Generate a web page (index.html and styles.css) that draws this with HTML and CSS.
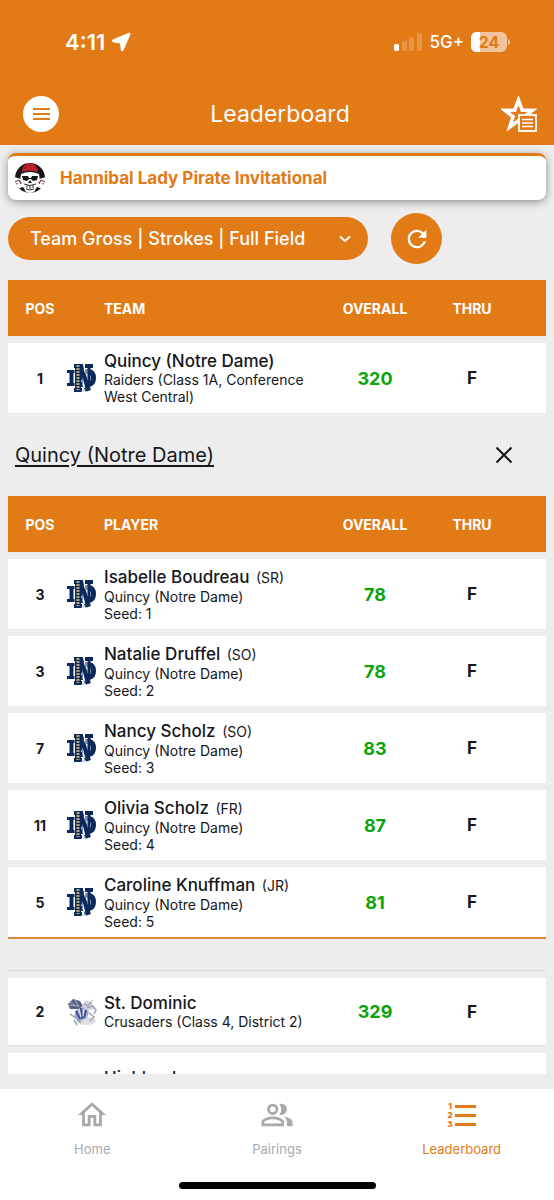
FILE: index.html
```html
<!DOCTYPE html>
<html lang="en">
<head>
  <meta charset="UTF-8" />
  <title>Leaderboard</title>
  <meta name="viewport" content="width=device-width, initial-scale=1" />
  <link rel="stylesheet" href="styles.css">
</head>
<body>
  <!-- shared team logo -->
  <svg class="defs" aria-hidden="true">
    <symbol id="logo-nd" viewBox="0 0 30 30">
      <g fill="none" stroke="#0b2a5b">
        <path d="M4.500 8v14" stroke-width="4" />
        <path d="M0 8.500h10M0 21.500h10" stroke-width="3" />
        <path d="M17 8.500h5q4.500 1 4.500 6.500t-4.500 6.500h-8" stroke-width="5" />
        <path d="M15 2l0 0M7 3h9M18 3h8M7 27h8" stroke-width="4" />
      </g>
      <g fill="none" stroke="#fff">
        <path d="M8 6v18M20 6v20" stroke-width="1" />
      </g>
      <g fill="none" stroke="#0b2a5b">
        <path d="M11 3v24" stroke-width="6" />
        <path d="M22 3v20" stroke-width="3" />
        <path d="M13 3l8 25" stroke-width="6" />
      </g>
      <path d="M15.500 14v9l3 3zM18.500 6v6l-2-6z" fill="#fff" />
      <path d="M11 2v25" stroke="#b5a57c" stroke-width="3" stroke-dasharray="2 1" />
      <path d="M14 29l3-3 3 3z" fill="#d5d5da" />
    </symbol>
  </svg>

  <header class="header">
    <div class="statusbar">
      <span class="clock">4:11
        <svg width="20" height="20" viewBox="0 0 20 20"><path d="M18 1.200Q19.500 .8 19 2.200L12 18.300q-1 1.500-1.700-.2L9.500 11 2 9.800Q.2 9 1.600 8z" fill="#fff" stroke="#fff" stroke-width="1" /></svg>
      </span>
      <span class="signal">
        <svg width="28" height="18" viewBox="0 0 28 18" fill="#fff">
          <rect x="0" y="11" width="5" height="7" rx="1.500" />
          <g opacity=".2">
            <rect x="8" y="8" width="5" height="10" rx="1.500" />
            <rect x="15" y="4" width="5" height="14" rx="1.500" />
            <rect x="23" y="0" width="5" height="18" rx="1.500" />
          </g>
        </svg>
        <span class="network">5G+</span>
        <svg width="39" height="20" viewBox="0 0 39 20">
          <rect width="36" height="20" rx="6" fill="#f3c49b" />
          <path d="M6 0H9V20H6Q0 20 0 14V6Q0 0 6 0z" fill="#fff" />
          <path d="M37 7q2 1 2 3t-2 3z" fill="#f3c49b" />
          <text class="battery-text" x="18" y="16" text-anchor="middle">24</text>
        </svg>
      </span>
    </div>
    <div class="titlebar">
      <button class="menu-btn" aria-label="Menu">
        <svg width="17" height="12" viewBox="0 0 17 12" stroke="#e27a16" stroke-width="1.800"><path d="M0 1h17M0 6h17M0 11h17" /></svg>
      </button>
      <h1>Leaderboard</h1>
      <button class="fav-btn" aria-label="Favorites">
        <svg width="36" height="36" viewBox="0 0 36 36">
          <path d="M17.500 4l3.700 10.200h10.500l-8.300 6.500 3.200 10.500-9.100-6.500-8.800 6.300 3.300-10.300-8.300-6.500h10z" fill="none" stroke="#fff" stroke-width="3.600" />
          <rect x="18" y="19" width="17" height="16" fill="#e27a16" stroke="#fff" stroke-width="1.800" />
          <path d="M21 23.500h11M21 27h11M21 30.500h11" stroke="#fff" stroke-width="1.600" />
        </svg>
      </button>
    </div>
  </header>

  <main class="main">
    <div class="event">
      <svg class="event-logo" width="32" height="32" viewBox="0 0 32 32">
        <circle cx="16" cy="16" r="15" fill="#17171b" />
        <path d="M0 15l7 2-1 5-6-1zM32 15l-7 2 1 5 6-1z" fill="#fff" />
        <path d="M1 23l8-3h14l8 3-2 4-6-2-4 5h-6l-4-5-6 2z" fill="#fff" />
        <path d="M7 12q9-4 18 0l1 7-4 4-1 6q-5 4-10 0l-1-6-4-4z" fill="#fff" />
        <path d="M8 10Q8 2 16 1q8 1 8 9-8-3-16 0z" fill="#c4202c" />
        <path d="M10 7l3-3M15 5l2-2M20 6l2-2" stroke="#7d1018" stroke-width="1" />
        <path d="M8 14l6 0 1 2h2l1-2 6 0-1 4-4 1-2-2h-2l-2 2-4-1z" fill="#17171b" />
        <path d="M16 18l2 3h-4z" fill="#17171b" />
        <path d="M10 22q6 3 12 0M12 27q4 2 8 0M13 23v3M16 24v3M19 23v3" fill="none" stroke="#17171b" stroke-width=".9" />
        <path d="M1 20l4-2 2 4M31 20l-4-2-2 4" fill="none" stroke="#7d1018" stroke-width="1" />
      </svg>
      <h2>Hannibal Lady Pirate Invitational</h2>
    </div>

    <div class="filters">
      <div class="select-wrap">
        <select class="view-select" aria-label="Leaderboard view">
          <option>Team Gross | Strokes | Full Field</option>
        </select>
        <svg class="chevron" width="12" height="8" viewBox="0 0 12 8"><path d="M1 1.500l5 4.500 5-4.500" fill="none" stroke="#fff" stroke-width="2" /></svg>
      </div>
      <button class="refresh-btn" aria-label="Refresh">
        <svg width="28" height="28" viewBox="0 0 24 24"><path fill="#fff" d="M17.650 6.350A7.960 7.960 0 0 0 12 4a8 8 0 1 0 7.730 10h-2.080A6 6 0 1 1 12 6c1.660 0 3.140.69 4.220 1.780L13 11h7V4z" /></svg>
      </button>
    </div>

    <div class="list">
      <table class="board">
        <colgroup><col class="c-pos"><col class="c-logo"><col><col class="c-overall"><col class="c-thru"><col class="c-end"></colgroup>
        <thead>
          <tr><th>POS</th><th></th><th class="left">TEAM</th><th>OVERALL</th><th>THRU</th><th></th></tr>
        </thead>
        <tbody>
          <tr>
            <td class="pos">1</td>
            <td class="logo"><svg width="30" height="30"><use href="#logo-nd" /></svg></td>
            <td class="left"><div class="name">Quincy (Notre Dame)</div><div class="sub">Raiders (Class 1A, Conference West Central)</div></td>
            <td class="score">320</td>
            <td class="thru">F</td>
            <td></td>
          </tr>
          <tr class="detail">
            <td colspan="6">
              <div class="detail-head">
                <a href="#">Quincy (Notre Dame)</a>
                <button class="close-btn" aria-label="Close">
                  <svg width="18" height="18" viewBox="0 0 18 18"><path d="M1.500 1.500l15 15M16.500 1.500l-15 15" stroke="#15171c" stroke-width="2" /></svg>
                </button>
              </div>
              <table class="board players">
                <colgroup><col class="c-pos"><col class="c-logo"><col><col class="c-overall"><col class="c-thru"><col class="c-end"></colgroup>
                <thead>
                  <tr><th>POS</th><th></th><th class="left">PLAYER</th><th>OVERALL</th><th>THRU</th><th></th></tr>
                </thead>
                <tbody>
                  <tr>
                    <td class="pos">3</td>
                    <td class="logo"><svg width="30" height="30"><use href="#logo-nd" /></svg></td>
                    <td class="left"><div class="name">Isabelle Boudreau <span class="year">(SR)</span></div><div class="sub">Quincy (Notre Dame)</div><div class="sub">Seed: 1</div></td>
                    <td class="score">78</td>
                    <td class="thru">F</td>
                    <td></td>
                  </tr>
                  <tr>
                    <td class="pos">3</td>
                    <td class="logo"><svg width="30" height="30"><use href="#logo-nd" /></svg></td>
                    <td class="left"><div class="name">Natalie Druffel <span class="year">(SO)</span></div><div class="sub">Quincy (Notre Dame)</div><div class="sub">Seed: 2</div></td>
                    <td class="score">78</td>
                    <td class="thru">F</td>
                    <td></td>
                  </tr>
                  <tr>
                    <td class="pos">7</td>
                    <td class="logo"><svg width="30" height="30"><use href="#logo-nd" /></svg></td>
                    <td class="left"><div class="name">Nancy Scholz <span class="year">(SO)</span></div><div class="sub">Quincy (Notre Dame)</div><div class="sub">Seed: 3</div></td>
                    <td class="score">83</td>
                    <td class="thru">F</td>
                    <td></td>
                  </tr>
                  <tr>
                    <td class="pos">11</td>
                    <td class="logo"><svg width="30" height="30"><use href="#logo-nd" /></svg></td>
                    <td class="left"><div class="name">Olivia Scholz <span class="year">(FR)</span></div><div class="sub">Quincy (Notre Dame)</div><div class="sub">Seed: 4</div></td>
                    <td class="score">87</td>
                    <td class="thru">F</td>
                    <td></td>
                  </tr>
                  <tr>
                    <td class="pos">5</td>
                    <td class="logo"><svg width="30" height="30"><use href="#logo-nd" /></svg></td>
                    <td class="left"><div class="name">Caroline Knuffman <span class="year">(JR)</span></div><div class="sub">Quincy (Notre Dame)</div><div class="sub">Seed: 5</div></td>
                    <td class="score">81</td>
                    <td class="thru">F</td>
                    <td></td>
                  </tr>
                </tbody>
              </table>
            </td>
          </tr>
          <tr class="team-row">
            <td class="pos">2</td>
            <td class="logo">
              <svg width="30" height="30" viewBox="0 0 30 30">
                <ellipse cx="19" cy="24" rx="10" ry="4" fill="#dedfe3" />
                <path d="M1 7l5-5 7 2 3 5-4 3-9 0z" fill="#596184" />
                <path d="M3 5l6 4M8 3l4 7M1 8l11 1" stroke="#a9afc5" stroke-width="1" />
                <path d="M15 8l4-5 3 2 4-3-1 6 4 4-6 1-5 3z" fill="#d3d4da" />
                <path d="M17 7l4 2 3-4M20 11l5-2" stroke="#85889a" fill="none" />
                <path d="M9 13l7-3 6 5-2 6-8 4-5-5z" fill="#a3acd0" />
                <path d="M9 14l4 8M14 11l1 11M19 13l-2 8" stroke="#3f4f92" stroke-width="2" />
                <path d="M12 12l2 8M17 12l-1 7" stroke="#eef0f8" stroke-width="1" />
                <path d="M3 17l6 4 5 5M22 16l5 4-4 4M7 23l3 5M25 8l4 5-2 4" stroke="#9fa1ae" fill="none" stroke-width="1.500" />
              </svg>
            </td>
            <td class="left"><div class="name">St. Dominic</div><div class="sub">Crusaders (Class 4, District 2)</div></td>
            <td class="score">329</td>
            <td class="thru">F</td>
            <td></td>
          </tr>
          <tr class="team-row">
            <td></td>
            <td></td>
            <td class="left"><div class="name">Highland</div><div class="sub">&nbsp;</div></td>
            <td></td>
            <td></td>
            <td></td>
          </tr>
        </tbody>
      </table>
    </div>
  </main>

  <nav class="tabs">
    <a class="tab" href="#">
      <svg width="34" height="34" viewBox="0 0 24 24"><path fill="currentColor" d="M12 5.690l5 4.500V18h-2v-6H9v6H7v-7.810l5-4.500M12 3 2 12h3v8h6v-6h2v6h6v-8h3z" /></svg>
      Home
    </a>
    <a class="tab" href="#">
      <svg width="34" height="34" viewBox="0 0 24 24"><path fill="currentColor" d="M16.500 13.130A5 5 0 0 1 19 17v3h4v-3c0-2.180-3.570-3.470-6.500-3.870zM15 12a4 4 0 1 0 0-8c-.47 0-.91.1-1.330.24a6 6 0 0 1 0 7.520c.42.14.86.24 1.330.24zM9 12a4 4 0 1 0 0-8 4 4 0 0 0 0 8zm0-6a2 2 0 1 1 0 4 2 2 0 0 1 0-4zM9 13c-2.670 0-8 1.340-8 4v3h16v-3c0-2.660-5.330-4-8-4zm6 5H3v-1c0-.7 3.100-2 6-2s6 1.300 6 2z" /></svg>
      Pairings
    </a>
    <a class="tab active" href="#">
      <svg width="34" height="34" viewBox="0 0 34 34" fill="currentColor">
        <rect x="10" y="7" width="21" height="3" />
        <rect x="10" y="16" width="21" height="3" />
        <rect x="10" y="25" width="21" height="3" />
        <g class="list-num">
          <text x="5" y="11">1</text>
          <text x="5" y="20">2</text>
          <text x="5" y="29">3</text>
        </g>
      </svg>
      Leaderboard
    </a>
    <div class="home-bar"></div>
  </nav>
</body>
</html>
```
FILE: styles.css
```css
* {
  box-sizing: border-box;
}
body {
  margin: 0;
  height: 100vh;
  display: flex;
  flex-direction: column;
  background: #ededed;
  color: #15171c;
  font-family: Inter, sans-serif;
  font-size: 15px;
}
button {
  border: none;
  padding: 0;
  background: none;
  display: flex;
  align-items: center;
  justify-content: center;
}
svg {
  display: block;
}
.defs {
  position: absolute;
  width: 0;
  height: 0;
}

/* header */
.header {
  background: #e27a16;
  color: #fff;
}
.statusbar {
  height: 83px;
  padding: 0 44px 0 65px;
  display: flex;
  align-items: center;
  justify-content: space-between;
}
.clock {
  display: flex;
  align-items: center;
  gap: 6px;
  font-size: 22px;
  font-weight: 600;
}
.signal {
  display: flex;
  align-items: center;
  gap: 7px;
}
.network {
  font-size: 17px;
  font-weight: 500;
}
.battery-text {
  font-size: 16px;
  font-weight: 700;
  fill: #e27a16;
}
.titlebar {
  height: 62px;
  padding: 0 17px 0 23px;
  display: flex;
  align-items: center;
  justify-content: space-between;
}
.titlebar h1 {
  margin: 0;
  font-size: 23px;
  font-weight: 400;
}
.menu-btn {
  width: 36px;
  height: 36px;
  border-radius: 50%;
  background: #fff;
}

/* event card and filters */
.main {
  flex: 1;
  min-height: 0;
  padding: 8px 8px 15px;
  display: flex;
  flex-direction: column;
}
.event {
  display: flex;
  align-items: center;
  gap: 14px;
  height: 47px;
  padding: 0 6px;
  background: #fff;
  border-top: 3px solid #e27a16;
  border-radius: 8px;
  box-shadow: 0 2px 8px rgba(0, 0, 0, 0.4);
  flex-shrink: 0;
}
.event h2 {
  margin: 0;
  color: #e27a16;
  font-size: 17px;
  font-weight: 700;
}
.filters {
  display: flex;
  align-items: center;
  gap: 23px;
  padding: 13px 0 16px;
}
.select-wrap {
  position: relative;
  flex: 0 1 360px;
}
.view-select {
  appearance: none;
  width: 100%;
  height: 43px;
  padding: 0 44px 0 22px;
  border: none;
  border-radius: 22px;
  background: #e27a16;
  color: #fff;
  font-family: inherit;
  font-size: 18px;
  font-weight: 500;
}
.chevron {
  position: absolute;
  right: 17px;
  top: 18px;
  pointer-events: none;
}
.refresh-btn {
  width: 51px;
  height: 51px;
  border-radius: 50%;
  background: #e27a16;
}

/* leaderboard tables */
.list {
  flex: 1;
  min-height: 0;
  overflow-y: auto;
  scrollbar-width: none;
}
.board {
  width: 100%;
  table-layout: fixed;
  border-spacing: 0;
}
.c-pos { width: 59px; }
.c-logo { width: 37px; }
.c-overall { width: 98px; }
.c-thru { width: 96px; }
.c-end { width: 26px; }
th {
  height: 56px;
  padding: 0;
  background: #e27a16;
  color: #fff;
  font-size: 14px;
  font-weight: 700;
  text-align: center;
}
th:first-child,
.pos {
  padding-left: 5px;
}
td {
  height: 77px;
  padding: 0;
  background: #fff;
  border-top: 7px solid #ededed;
  text-align: center;
}
.board .left {
  text-align: left;
}
.name {
  font-size: 17px;
  font-weight: 500;
  line-height: 20px;
}
.sub {
  font-size: 14px;
  line-height: 17px;
}
.year {
  margin-left: 2px;
  font-size: 14px;
  font-weight: 400;
}
.pos {
  font-size: 14px;
  font-weight: 700;
}
.score {
  color: #0aa30a;
  font-size: 18px;
  font-weight: 700;
}
.thru {
  font-size: 17px;
  font-weight: 700;
}
.detail > td {
  border-top: none;
  border-bottom: 1px solid #d8d8d8;
  background: #ededed;
  padding-bottom: 31px;
}
.detail-head {
  height: 83px;
  padding: 0 33px 0 7px;
  display: flex;
  align-items: center;
  justify-content: space-between;
}
.detail-head a {
  color: inherit;
  font-size: 20px;
  text-underline-offset: 3px;
}
.players tbody tr:last-child td {
  height: 79px;
  border-bottom: 2px solid #dd883c;
}
.team-row td {
  height: 75px;
  border-bottom: 1px solid #dfdfdf;
}

/* bottom tabs */
.tabs {
  display: grid;
  grid-template-columns: repeat(3, 1fr);
  height: 111px;
  padding-top: 9px;
  background: #fff;
}
.tab {
  display: flex;
  flex-direction: column;
  align-items: center;
  gap: 9px;
  color: #a9a9ac;
  font-size: 13px;
  text-decoration: none;
}
.tab.active {
  color: #e27a16;
}
.list-num {
  font-size: 8px;
  font-weight: 900;
  text-anchor: middle;
}
.home-bar {
  grid-column: 1 / -1;
  justify-self: center;
  align-self: end;
  width: 197px;
  height: 7px;
  margin-bottom: 11px;
  border-radius: 4px;
  background: #000;
}
```
